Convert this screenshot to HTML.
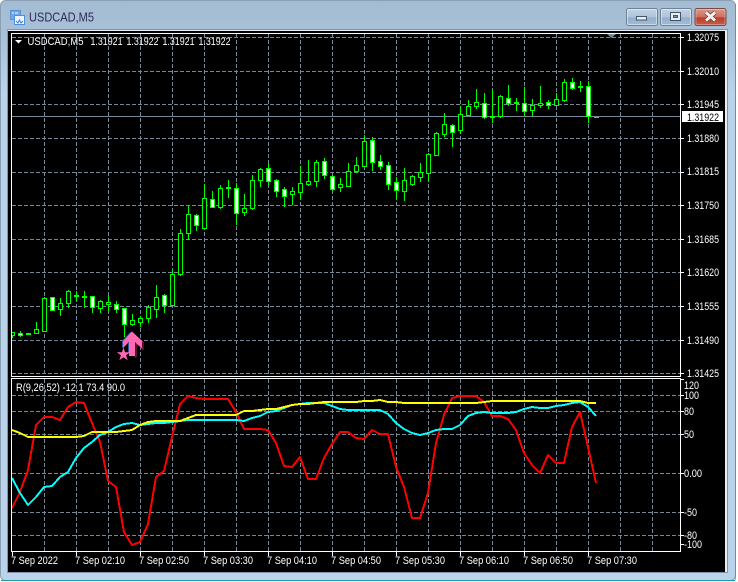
<!DOCTYPE html>
<html><head><meta charset="utf-8"><title>USDCAD,M5</title>
<style>
html,body{margin:0;padding:0;background:#fff;width:738px;height:582px;overflow:hidden}
svg{display:block;position:absolute;left:0;top:0}
text{font-family:"Liberation Sans",sans-serif;font-size:11px;fill:#fff}
.g{stroke:#778899;stroke-width:1;stroke-dasharray:4 2;fill:none}
</style></head><body>
<svg width="738" height="582" viewBox="0 0 738 582">
<defs>
<linearGradient id="tb" x1="0" y1="0" x2="0" y2="1"><stop offset="0" stop-color="#a3bcd2"/><stop offset=".06" stop-color="#a8c1d8"/><stop offset=".16" stop-color="#bad2ea"/><stop offset="1" stop-color="#bad2ea"/></linearGradient>
<linearGradient id="bt" x1="0" y1="0" x2="0" y2="1"><stop offset="0" stop-color="#c3d3e4"/><stop offset=".5" stop-color="#afc4da"/><stop offset=".55" stop-color="#94afcb"/><stop offset="1" stop-color="#a2bdd6"/></linearGradient>
<linearGradient id="cl" x1="0" y1="0" x2="0" y2="1"><stop offset="0" stop-color="#dc9a8e"/><stop offset=".5" stop-color="#cd6f5f"/><stop offset=".55" stop-color="#b83c2b"/><stop offset="1" stop-color="#c9604d"/></linearGradient>
<clipPath id="mc"><rect x="12" y="34" width="668" height="342"/></clipPath>
</defs>
<rect width="738" height="582" fill="#fff"/>
<rect x=".5" y=".5" width="735" height="580" rx="5" fill="url(#tb)" stroke="#8aa0b4"/>
<path d="M1 580.5H735" stroke="#1e9faa"/>
<path d="M735.5 4V580" stroke="#1e9faa" stroke-opacity=".6"/>

<!-- title icon -->
<rect x="10.5" y="10.5" width="10" height="9" fill="#6ea6e6" stroke="#5b93d8"/>
<path d="M12 13h2M15 13h3" stroke="#fff"/>
<rect x="14.5" y="15.5" width="10" height="9" fill="#eef5ff" stroke="#4d8fdc"/>
<path d="M16 21l2 2 1.5-3 1.5 3 2-2" stroke="#3e7fd0" fill="none"/>
<text x="29" y="21.5" textLength="65" lengthAdjust="spacingAndGlyphs" style="font-size:13px;fill:#2f2a5a">USDCAD,M5</text>

<!-- buttons -->
<rect x="626.5" y="8.5" width="31" height="17" rx="2" fill="url(#bt)" stroke="#6f8296"/>
<rect x="627.5" y="9.5" width="29" height="15" rx="1" fill="none" stroke="#fff" stroke-opacity=".45"/>
<rect x="636.5" y="16.5" width="10" height="3.5" fill="#e8eef5" stroke="#46566a"/>
<rect x="660.5" y="8.5" width="31" height="17" rx="2" fill="url(#bt)" stroke="#6f8296"/>
<rect x="661.5" y="9.5" width="29" height="15" rx="1" fill="none" stroke="#fff" stroke-opacity=".45"/>
<rect x="670.5" y="12.5" width="10" height="8" fill="#e8eef5" stroke="#46566a"/>
<rect x="673.5" y="15.5" width="4" height="2" fill="#7e93a8" stroke="#46566a"/>
<rect x="695" y="8.5" width="31" height="17" rx="2" fill="url(#cl)" stroke="#7a4a4a"/>
<rect x="696" y="9.5" width="29" height="15" rx="1" fill="none" stroke="#fff" stroke-opacity=".3"/>
<path d="M706 12.5l9 8M715 12.5l-9 8" stroke="#5a3a3a" stroke-width="4.4"/>
<path d="M706 12.5l9 8M715 12.5l-9 8" stroke="#f4efef" stroke-width="3"/>

<!-- client -->
<rect x="7.5" y="29.5" width="720" height="543" fill="#e8eef4" stroke="#8294a6"/>
<rect x="8" y="31" width="717" height="541" fill="#000"/>

<!-- grids -->
<path class="g" d="M12 37.5H680M12 71.5H680M12 104.5H680M12 138.5H680M12 172.5H680M12 205.5H680M12 239.5H680M12 272.5H680M12 306.5H680M12 340.5H680M12 373.5H680"/>
<path class="g" d="M44.5 34V376M76.5 34V376M108.5 34V376M140.5 34V376M172.5 34V376M204.5 34V376M236.5 34V376M268.5 34V376M300.5 34V376M332.5 34V376M364.5 34V376M396.5 34V376M428.5 34V376M460.5 34V376M492.5 34V376M524.5 34V376M556.5 34V376M588.5 34V376M620.5 34V376M652.5 34V376"/>
<path class="g" d="M12 395.5H680M12 411.5H680M12 434.5H680M12 473.5H680M12 512.5H680M12 535.5H680"/>
<path class="g" d="M44.5 379V551M76.5 379V551M108.5 379V551M140.5 379V551M172.5 379V551M204.5 379V551M236.5 379V551M268.5 379V551M300.5 379V551M332.5 379V551M364.5 379V551M396.5 379V551M428.5 379V551M460.5 379V551M492.5 379V551M524.5 379V551M556.5 379V551M588.5 379V551M620.5 379V551M652.5 379V551"/>
<path d="M12 116.5H680" stroke="#778899"/>

<!-- candles -->
<g clip-path="url(#mc)">
<path fill="none" stroke="#0f0" d="M12.5 332V338M20.5 331V337M36.5 322V334M44.5 297V332M52.5 297V311M60.5 298V316M68.5 290V308M76.5 291V301M84.5 291V308M92.5 296V313M100.5 300V313M108.5 295V311M116.5 301V313M124.5 308V337M132.5 314V326M140.5 316V327M148.5 305V323M156.5 285V318M164.5 294V313M172.5 270V306M180.5 229V276M188.5 206V240M196.5 214V231M204.5 184V229M212.5 191V208M220.5 185V209M228.5 180V198M236.5 183V225M244.5 194V216M252.5 175V210M260.5 168V187M268.5 163V186M276.5 179V197M284.5 187V207M292.5 187V205M300.5 166V200M308.5 160V186M316.5 160V187M324.5 158V179M332.5 175V191M340.5 178V192M348.5 163V187M356.5 157V173M364.5 135V167M372.5 137V171M380.5 155V170M388.5 162V190M396.5 177V200M404.5 168V201M412.5 175V186M420.5 163V182M428.5 153V181M436.5 132V156M444.5 113V137M452.5 124V147M460.5 106V134M468.5 100V116M476.5 89V109M484.5 93V119M492.5 90V123M500.5 95V118M508.5 85V106M516.5 98V111M524.5 87V116M532.5 99V116M540.5 86V108M548.5 100V109M556.5 93V106M564.5 79V102M572.5 78V90M580.5 81V92M588.5 81V123"/>
<path fill="#000" stroke="#0f0" d="M10.5 332.5h4v3h-4zM26.5 333.5h4v1h-4zM34.5 329.5h4v4h-4zM42.5 298.5h4v33h-4zM58.5 303.5h4v6h-4zM66.5 291.5h4v12h-4zM74.5 295.5h4v1h-4zM82.5 296.5h4v1h-4zM98.5 301.5h4v7h-4zM106.5 302.5h4v2h-4zM130.5 320.5h4v4h-4zM138.5 318.5h4v4h-4zM146.5 307.5h4v11h-4zM154.5 297.5h4v12h-4zM170.5 274.5h4v31h-4zM178.5 233.5h4v41h-4zM186.5 214.5h4v19h-4zM202.5 198.5h4v30h-4zM218.5 188.5h4v19h-4zM226.5 187.5h4v1h-4zM242.5 208.5h4v4h-4zM250.5 180.5h4v28h-4zM258.5 169.5h4v11h-4zM290.5 191.5h4v3h-4zM298.5 183.5h4v9h-4zM306.5 181.5h4v3h-4zM314.5 162.5h4v19h-4zM338.5 184.5h4v3h-4zM346.5 171.5h4v15h-4zM354.5 165.5h4v6h-4zM362.5 141.5h4v25h-4zM402.5 180.5h4v11h-4zM410.5 176.5h4v8h-4zM418.5 172.5h4v5h-4zM426.5 154.5h4v19h-4zM434.5 133.5h4v22h-4zM442.5 124.5h4v10h-4zM458.5 114.5h4v16h-4zM466.5 106.5h4v9h-4zM474.5 102.5h4v4h-4zM490.5 116.5h4v1h-4zM498.5 96.5h4v20h-4zM514.5 102.5h4v1h-4zM530.5 105.5h4v5h-4zM538.5 103.5h4v2h-4zM554.5 99.5h4v6h-4zM562.5 82.5h4v18h-4zM578.5 86.5h4v1h-4z"/>
<path fill="#fff" stroke="#0f0" d="M18.5 333.5h4v2h-4zM50.5 297.5h4v13h-4zM90.5 296.5h4v11h-4zM114.5 304.5h4v5h-4zM122.5 308.5h4v16h-4zM162.5 295.5h4v10h-4zM194.5 215.5h4v10h-4zM210.5 199.5h4v8h-4zM234.5 188.5h4v25h-4zM266.5 168.5h4v13h-4zM274.5 180.5h4v11h-4zM282.5 189.5h4v7h-4zM322.5 161.5h4v14h-4zM330.5 176.5h4v13h-4zM370.5 140.5h4v22h-4zM378.5 161.5h4v5h-4zM386.5 165.5h4v19h-4zM394.5 182.5h4v8h-4zM450.5 125.5h4v7h-4zM482.5 103.5h4v14h-4zM506.5 98.5h4v5h-4zM522.5 103.5h4v8h-4zM546.5 102.5h4v3h-4zM570.5 82.5h4v6h-4zM586.5 86.5h4v30h-4z"/>
<path d="M594 117.5h5" stroke="#0f0"/>
</g>

<!-- arrow and star -->
<path d="M124 341.5L132 332.5L143 342V349L136 343V357H135" fill="none" stroke="#a8285f" stroke-width="1"/>
<path d="M122.5 348V341L131 332" fill="none" stroke="#33509a" stroke-width="1"/>
<path d="M132 331.5L142 341V348L135 342V356H129V342L123 348V341Z" fill="#ff69b4"/>
<path d="M128.5 342V353" stroke="#33509a" stroke-width="1"/>
<path d="M123.5 347.5L125.100 352.300L130.200 352.300L126.100 355.300L127.700 360.200L123.500 357.200L119.300 360.200L120.900 355.300L116.800 352.300L121.900 352.300Z" fill="#ff69b4"/>
<path d="M607 34H616L611.5 38Z" fill="#778899"/>

<!-- RSI lines -->
<g fill="none" stroke-width="2" stroke-linejoin="round" shape-rendering="crispEdges">
<polyline stroke="#f00" points="12,508 20,492 28,470 36,425 44,417 52,417 60,420 68,407 76,402 84,403 92,423 100,442 108,481 116,487 124,532 132,545 140,542 148,524 156,477 164,471 172,437 180,404 188,396 196,398 204,399 212,399 220,399 228,399 236,412 244,429 252,429 260,429 268,430 276,443 284,466 292,467 300,457 308,479 316,479 324,458 332,444 340,432 348,432 356,438 364,439 372,430 380,434 388,434 396,467 404,487 412,518 420,518 428,493 436,443 444,415 452,398 460,396 468,396 476,396 484,402 492,416 500,416 508,419 516,430 524,453 532,465 540,473 548,455 556,463 564,463 572,427 580,412 588,447 596,483"/>
<polyline stroke="#0ff" points="12,478 20,493 28,505 36,497 44,487 52,486 60,477 68,472 76,458 84,448 92,442 100,435 108,432 116,427 124,424 132,423 140,425 148,424 156,423 164,423 172,422 180,421 188,420 196,420 204,420 212,420 220,420 228,420 236,420 244,421 252,418 260,416 268,412 276,411 284,408 292,405 300,404 308,403 316,403 324,403 332,406 340,409 348,410 356,410 364,410 372,410 380,410 388,414 396,423 404,429 412,433 420,435 428,433 436,430 444,429 452,429 460,425 468,416 476,413 484,412 492,413 500,413 508,413 516,412 524,409 532,407 540,408 548,408 556,406 564,405 572,403 580,402 588,407 596,416"/>
<polyline stroke="#ff0" points="12,430 20,433 28,437 36,437 44,437 52,437 60,437 68,437 76,437 84,436 92,432 100,432 108,432 116,432 124,431 132,430 140,425 148,422 156,421 164,421 172,421 180,421 188,418 196,415 204,415 212,415 220,415 228,415 236,415 244,411 252,411 260,410 268,409 276,409 284,407 292,405 300,404 308,404 316,403 324,402 332,402 340,402 348,402 356,402 364,401 372,401 380,400 388,402 396,402 404,403 412,403 420,403 428,403 436,403 444,403 452,403 460,403 468,403 476,403 484,402 492,401 500,401 508,401 516,401 524,401 532,401 540,401 548,401 556,401 564,401 572,401 580,401 588,403 596,403"/>
</g>

<!-- frames -->
<g fill="none" stroke="#fff">
<path d="M11.5 33.5H680.5V376.5H11.5Z"/>
<path d="M11.5 378.5H680.5V551.5H11.5Z"/>
<path d="M681 37.5h3M681 71.5h3M681 104.5h3M681 138.5h3M681 172.5h3M681 205.5h3M681 239.5h3M681 272.5h3M681 306.5h3M681 340.5h3M681 373.5h3"/>
<path d="M681 395.5h3M681 411.5h3M681 434.5h3M681 473.5h3M681 512.5h3M681 535.5h3M681 379.5h3M681 544.5h3"/>
<path d="M12.5 552V556M76.5 552V556M140.5 552V556M204.5 552V556M268.5 552V556M332.5 552V556M396.5 552V556M460.5 552V556M524.5 552V556M588.5 552V556"/>
</g>

<!-- chart header -->
<path d="M15 40H22L18.500 43.500Z" fill="#fff"/>
<text x="27.500" y="45" textLength="56" lengthAdjust="spacingAndGlyphs">USDCAD,M5</text>
<text x="90.500" y="45" textLength="32" lengthAdjust="spacingAndGlyphs">1.31921</text>
<text x="126.500" y="45" textLength="32" lengthAdjust="spacingAndGlyphs">1.31922</text>
<text x="162.500" y="45" textLength="32" lengthAdjust="spacingAndGlyphs">1.31921</text>
<text x="198.500" y="45" textLength="32" lengthAdjust="spacingAndGlyphs">1.31922</text>
<text x="16" y="391" textLength="109" lengthAdjust="spacingAndGlyphs">R(9,26,52) -12.1 73.4 90.0</text>

<!-- price axis -->
<g>
<text x="687" y="41" textLength="32" lengthAdjust="spacingAndGlyphs">1.32075</text>
<text x="687" y="75" textLength="32" lengthAdjust="spacingAndGlyphs">1.32010</text>
<text x="687" y="108" textLength="32" lengthAdjust="spacingAndGlyphs">1.31945</text>
<text x="687" y="142" textLength="32" lengthAdjust="spacingAndGlyphs">1.31880</text>
<text x="687" y="175" textLength="32" lengthAdjust="spacingAndGlyphs">1.31815</text>
<text x="687" y="209" textLength="32" lengthAdjust="spacingAndGlyphs">1.31750</text>
<text x="687" y="243" textLength="32" lengthAdjust="spacingAndGlyphs">1.31685</text>
<text x="687" y="276" textLength="32" lengthAdjust="spacingAndGlyphs">1.31620</text>
<text x="687" y="310" textLength="32" lengthAdjust="spacingAndGlyphs">1.31555</text>
<text x="687" y="344" textLength="32" lengthAdjust="spacingAndGlyphs">1.31490</text>
<text x="687" y="377" textLength="32" lengthAdjust="spacingAndGlyphs">1.31425</text>
</g>
<rect x="682" y="111" width="41" height="11" fill="#fff"/>
<text x="687" y="121" textLength="32" lengthAdjust="spacingAndGlyphs" style="fill:#000">1.31922</text>

<!-- RSI axis -->
<text x="684" y="389" textLength="15" lengthAdjust="spacingAndGlyphs">120</text>
<text x="684" y="399" textLength="15" lengthAdjust="spacingAndGlyphs">100</text>
<text x="684" y="415" textLength="10" lengthAdjust="spacingAndGlyphs">80</text>
<text x="684" y="438" textLength="10" lengthAdjust="spacingAndGlyphs">50</text>
<text x="684" y="477" textLength="18" lengthAdjust="spacingAndGlyphs">0.00</text>
<text x="684" y="516" textLength="13" lengthAdjust="spacingAndGlyphs">-50</text>
<text x="684" y="539" textLength="13" lengthAdjust="spacingAndGlyphs">-80</text>
<text x="684" y="548" textLength="18" lengthAdjust="spacingAndGlyphs">-100</text>

<!-- time axis -->
<text x="11" y="564" textLength="47" lengthAdjust="spacingAndGlyphs">7 Sep 2022</text>
<text x="75" y="564" textLength="50" lengthAdjust="spacingAndGlyphs">7 Sep 02:10</text>
<text x="139" y="564" textLength="50" lengthAdjust="spacingAndGlyphs">7 Sep 02:50</text>
<text x="203" y="564" textLength="50" lengthAdjust="spacingAndGlyphs">7 Sep 03:30</text>
<text x="267" y="564" textLength="50" lengthAdjust="spacingAndGlyphs">7 Sep 04:10</text>
<text x="331" y="564" textLength="50" lengthAdjust="spacingAndGlyphs">7 Sep 04:50</text>
<text x="395" y="564" textLength="50" lengthAdjust="spacingAndGlyphs">7 Sep 05:30</text>
<text x="459" y="564" textLength="50" lengthAdjust="spacingAndGlyphs">7 Sep 06:10</text>
<text x="523" y="564" textLength="50" lengthAdjust="spacingAndGlyphs">7 Sep 06:50</text>
<text x="587" y="564" textLength="50" lengthAdjust="spacingAndGlyphs">7 Sep 07:30</text>
</svg>
</body></html>
